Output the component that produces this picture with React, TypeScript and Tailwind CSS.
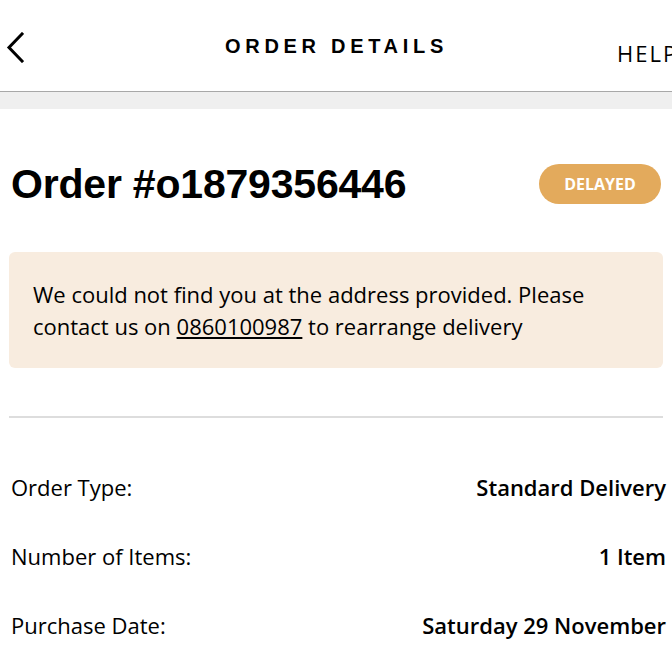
import React from "react";

const body = { fontFamily: '"Open Sans", "Noto Sans", sans-serif' } as React.CSSProperties;
const head = { fontFamily: '"Liberation Sans", Arial, sans-serif' } as React.CSSProperties;

function Row({ label, value }: { label: string; value: string }) {
  return (
    <div className="flex h-[69px] items-center justify-between pl-[2px] pr-0 text-[22px] text-black" style={body}>
      <span>{label}</span>
      <span className="font-semibold">{value}</span>
    </div>
  );
}

export default function App() {
  return (
    <div className="w-[672px] h-[672px] overflow-hidden bg-white">
      <header className="relative flex h-[92px] items-center border-b border-[#a8a8a8]">
        <svg className="absolute left-[6px] top-[32px]" width="18" height="31" viewBox="0 0 18 31" fill="none">
          <path d="M16 2 L3 15.5 L16 29" stroke="#000" strokeWidth="3" strokeLinecap="square" />
        </svg>
        <div className="flex-1 text-center text-[20px] font-bold tracking-[4.7px] text-black pl-[1px]" style={head}>
          ORDER DETAILS
        </div>
        <div className="absolute left-[617px] top-[37px] whitespace-nowrap text-[22px] tracking-[2px] text-black" style={body}>
          HELP
        </div>
      </header>
      <div className="h-[17px] bg-[#efefef]" />
      <main className="pl-[9px] pr-[6px] pt-[55px]">
        <div className="flex h-[40px] items-center justify-between pr-[5px]">
          <h1 className="pl-[2px] text-[41px] font-bold leading-none text-black tracking-[-0.2px]" style={head}>
            Order #o1879356446
          </h1>
          <span className="flex h-[40px] w-[122px] items-center justify-center rounded-full bg-[#e3aa5c] text-[16px] font-bold text-white" style={body}>
            DELAYED
          </span>
        </div>
        <div className="mt-[48px] mr-[3px] rounded-[6px] bg-[#f8ecdf] pl-[24px] pr-[20px] pt-[26px] pb-[26px] text-[22px] leading-[32px] text-black" style={body}>
          We could not find you at the address provided. Please contact us on{" "}
          <span className="underline">0860100987</span> to rearrange delivery
        </div>
        <div className="mt-[48px] mr-[3px] h-[2px] bg-[#dddddd]" />
        <div className="pt-[35px]">
          <Row label="Order Type:" value="Standard Delivery" />
          <Row label="Number of Items:" value="1 Item" />
          <Row label="Purchase Date:" value="Saturday 29 November" />
        </div>
      </main>
    </div>
  );
}
